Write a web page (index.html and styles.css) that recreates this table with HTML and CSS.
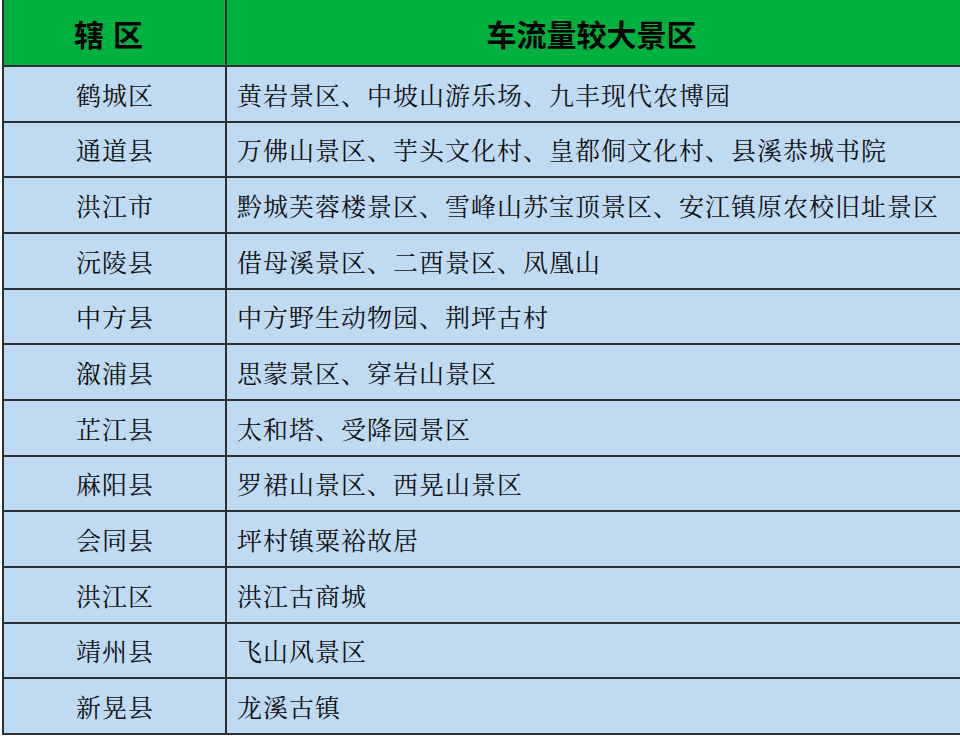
FILE: index.html
```html
<!DOCTYPE html>
<html lang="zh-CN">
<head>
<meta charset="utf-8">
<title>车流量较大景区</title>
<link rel="stylesheet" href="styles.css">
</head>
<body>
<div class="wrap">
<table class="tbl">
  <colgroup><col class="c1"><col class="c2"></colgroup>
  <thead>
    <tr><th class="h1">辖 区</th><th class="h2">车流量较大景区</th></tr>
  </thead>
  <tbody>
    <tr><td class="area">鹤城区</td><td class="spots">黄岩景区、中坡山游乐场、九丰现代农博园</td></tr>
    <tr><td class="area">通道县</td><td class="spots">万佛山景区、芋头文化村、皇都侗文化村、县溪恭城书院</td></tr>
    <tr><td class="area">洪江市</td><td class="spots">黔城芙蓉楼景区、雪峰山苏宝顶景区、安江镇原农校旧址景区</td></tr>
    <tr><td class="area">沅陵县</td><td class="spots">借母溪景区、二酉景区、凤凰山</td></tr>
    <tr><td class="area">中方县</td><td class="spots">中方野生动物园、荆坪古村</td></tr>
    <tr><td class="area">溆浦县</td><td class="spots">思蒙景区、穿岩山景区</td></tr>
    <tr><td class="area">芷江县</td><td class="spots">太和塔、受降园景区</td></tr>
    <tr><td class="area">麻阳县</td><td class="spots">罗裙山景区、西晃山景区</td></tr>
    <tr><td class="area">会同县</td><td class="spots">坪村镇粟裕故居</td></tr>
    <tr><td class="area">洪江区</td><td class="spots">洪江古商城</td></tr>
    <tr><td class="area">靖州县</td><td class="spots">飞山风景区</td></tr>
    <tr><td class="area">新晃县</td><td class="spots">龙溪古镇</td></tr>
  </tbody>
</table>
</div>
</body>
</html>
```

FILE: styles.css
```css
html, body {
  margin: 0;
  padding: 0;
  background: #ffffff;
}
.wrap {
  width: 960px;
  height: 737px;
  overflow: hidden;
}
.tbl {
  border-collapse: collapse;
  table-layout: fixed;
  width: 966px;
  margin-left: 2px;
  margin-top: -2px;
}
.c1 { width: 223px; }
.c2 { width: 743px; }
.tbl th, .tbl td {
  border: 2px solid #2e2f33;
  padding: 0;
  white-space: nowrap;
  overflow: hidden;
}
.tbl th {
  height: 65px;
  background: #00b140;
  color: #000;
  font-family: "Noto Sans CJK SC", "Liberation Sans", sans-serif;
  font-weight: 700;
  font-size: 30px;
  text-align: center;
}
.tbl th.h1 { padding-right: 12px; word-spacing: 2px; }
.tbl th.h2 { padding-right: 12px; }
.tbl td {
  height: 53.67px;
  background: #c0daf2;
  color: #111;
  font-family: "Noto Serif CJK SC", "Noto Sans CJK SC", serif;
  font-size: 25px;
  letter-spacing: 1px;
  font-weight: 400;
}
.tbl td.area { text-align: center; padding-left: 1px; }
.tbl td.spots { text-align: left; padding-left: 10px; }
```
